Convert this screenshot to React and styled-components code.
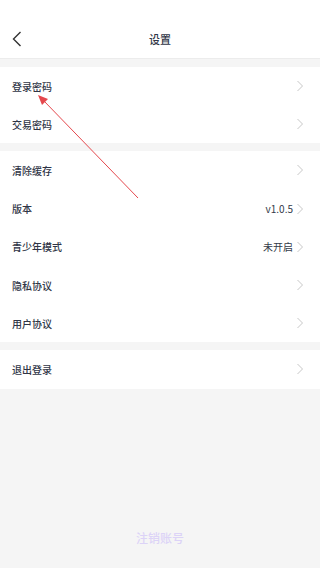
import styled, { createGlobalStyle } from 'styled-components';

const GlobalStyle = createGlobalStyle`
  html, body {
    margin: 0;
    padding: 0;
    background: #f5f5f5;
  }
  body {
    font-family: "Noto Sans CJK SC", "Noto Sans", sans-serif;
  }
`;

const groups = [
  [{ label: '登录密码' }, { label: '交易密码' }],
  [
    { label: '清除缓存' },
    { label: '版本', value: 'v1.0.5' },
    { label: '青少年模式', value: '未开启' },
    { label: '隐私协议' },
    { label: '用户协议' },
  ],
  [{ label: '退出登录' }],
];

function Chevron() {
  return (
    <svg width='8' height='12' viewBox='0 0 8 12'>
      <path d='M1.5 1 L6.5 6 L1.5 11' fill='none' stroke='#c8c8c8' strokeWidth='1' />
    </svg>
  );
}

function App() {
  return (
    <Page>
      <GlobalStyle />
      <Header>
        <BackButton>
          <svg width='10' height='16' viewBox='0 0 10 16'>
            <path d='M8.5 1 L1.5 8 L8.5 15' fill='none' stroke='#333' strokeWidth='1.4' />
          </svg>
        </BackButton>
        <Title>设置</Title>
      </Header>
      {groups.map((rows, i) => (
        <Group key={i}>
          {rows.map((row) => (
            <Row key={row.label}>
              <Label>{row.label}</Label>
              <Right>
                {row.value && <Value>{row.value}</Value>}
                <Chevron />
              </Right>
            </Row>
          ))}
        </Group>
      ))}
      <Footer>注销账号</Footer>
      <Arrow width='320' height='568' viewBox='0 0 320 568'>
        <line x1='138' y1='198' x2='44' y2='101' stroke='#e5484d' strokeWidth='1' />
        <path d='M38 95 L48 99 L42 105 Z' fill='#e5484d' />
      </Arrow>
    </Page>
  );
}

const Page = styled.div`
  position: relative;
  width: 320px;
  height: 568px;
  background: #f5f5f5;
  display: flex;
  flex-direction: column;
  overflow: hidden;
`;

const Header = styled.div`
  height: 59px;
  background: #fff;
  border-bottom: 1px solid #ececec;
  display: flex;
  align-items: center;
  justify-content: center;
  position: relative;
  box-sizing: border-box;
`;

const BackButton = styled.div`
  position: absolute;
  left: 12px;
  top: 31px;
  display: flex;
`;

const Title = styled.div`
  font-size: 11px;
  font-weight: 500;
  color: #2f3546;
  margin-top: 19px;
`;

const Group = styled.div`
  background: #fff;
  margin-top: 8px;
`;

const Row = styled.div`
  height: 38.2px;
  display: flex;
  align-items: center;
  justify-content: space-between;
  padding: 0 16px 0 12px;
`;

const Label = styled.div`
  font-size: 10px;
  font-weight: 500;
  color: #2f3546;
`;

const Right = styled.div`
  display: flex;
  align-items: center;
  gap: 3px;
`;

const Value = styled.span`
  font-size: 10px;
  color: #333a48;
`;

const Footer = styled.div`
  margin-top: auto;
  margin-bottom: 22px;
  text-align: center;
  font-size: 12px;
  font-weight: 500;
  color: #dcd3f7;
`;

const Arrow = styled.svg`
  position: absolute;
  left: 0;
  top: 0;
  pointer-events: none;
`;

export default App;
